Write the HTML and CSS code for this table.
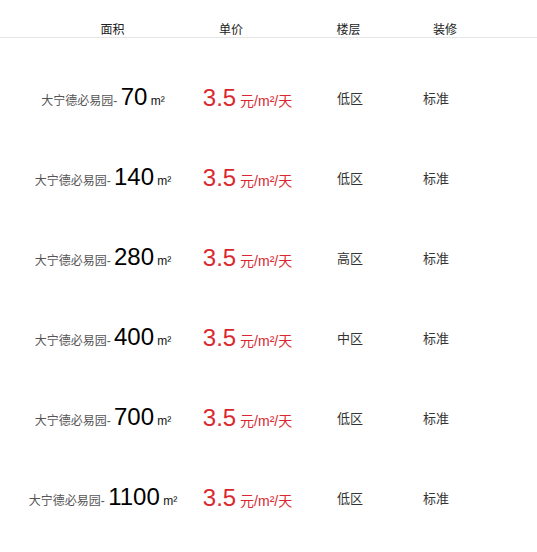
FILE: index.html
```html
<!DOCTYPE html>
<html lang="zh-CN">
<head>
<meta charset="utf-8">
<link rel="stylesheet" href="styles.css">
</head>
<body>
<div class="head">
  <div class="h h1">面积</div>
  <div class="h h2">单价</div>
  <div class="h h3">楼层</div>
  <div class="h h4">装修</div>
</div>
<div class="list">
  <div class="row">
    <div class="c area">大宁德必易园- <span class="num">70</span> <span class="unit">m²</span></div>
    <div class="c price"><span class="pn">3.5</span> 元/m²/天</div>
    <div class="c fl">低区</div>
    <div class="c dec">标准</div>
  </div>
  <div class="row">
    <div class="c area">大宁德必易园- <span class="num">140</span> <span class="unit">m²</span></div>
    <div class="c price"><span class="pn">3.5</span> 元/m²/天</div>
    <div class="c fl">低区</div>
    <div class="c dec">标准</div>
  </div>
  <div class="row">
    <div class="c area">大宁德必易园- <span class="num">280</span> <span class="unit">m²</span></div>
    <div class="c price"><span class="pn">3.5</span> 元/m²/天</div>
    <div class="c fl">高区</div>
    <div class="c dec">标准</div>
  </div>
  <div class="row">
    <div class="c area">大宁德必易园- <span class="num">400</span> <span class="unit">m²</span></div>
    <div class="c price"><span class="pn">3.5</span> 元/m²/天</div>
    <div class="c fl">中区</div>
    <div class="c dec">标准</div>
  </div>
  <div class="row">
    <div class="c area">大宁德必易园- <span class="num">700</span> <span class="unit">m²</span></div>
    <div class="c price"><span class="pn">3.5</span> 元/m²/天</div>
    <div class="c fl">低区</div>
    <div class="c dec">标准</div>
  </div>
  <div class="row">
    <div class="c area">大宁德必易园- <span class="num">1100</span> <span class="unit">m²</span></div>
    <div class="c price"><span class="pn">3.5</span> 元/m²/天</div>
    <div class="c fl">低区</div>
    <div class="c dec">标准</div>
  </div>
</div>
</body>
</html>
```
FILE: styles.css
```css
html, body {
  margin: 0;
  padding: 0;
  background: #fff;
}
body {
  font-family: "Liberation Sans", "Noto Sans CJK SC", sans-serif;
  color: #333;
}
.head {
  display: grid;
  grid-template-columns: 105px 132px 103px 90px;
  padding-left: 60px;
  height: 37px;
  border-bottom: 1px solid #e5e5e5;
  align-items: end;
  box-sizing: content-box;
}
.h {
  text-align: center;
  font-size: 12px;
  line-height: 17px;
  color: #222;
  padding-bottom: 0;
  margin-bottom: -2px;
}
.list {
  padding-top: 21px;
}
.row {
  display: grid;
  grid-template-columns: 194px 95px 110px 62px;
  padding-left: 6px;
  height: 80px;
  align-items: center;
  align-content: center;
}
.c {
  text-align: center;
  white-space: nowrap;
}
.area {
  font-size: 12px;
  color: #555;
  line-height: 30px;
}
.area .num {
  font-size: 24px;
  color: #000;
}
.area .unit {
  color: #111;
}
.price {
  color: #d9282f;
  font-size: 14px;
  line-height: 30px;
}
.pn {
  font-size: 24px;
}
.fl, .dec {
  font-size: 13px;
  color: #333;
  line-height: 30px;
}
```
